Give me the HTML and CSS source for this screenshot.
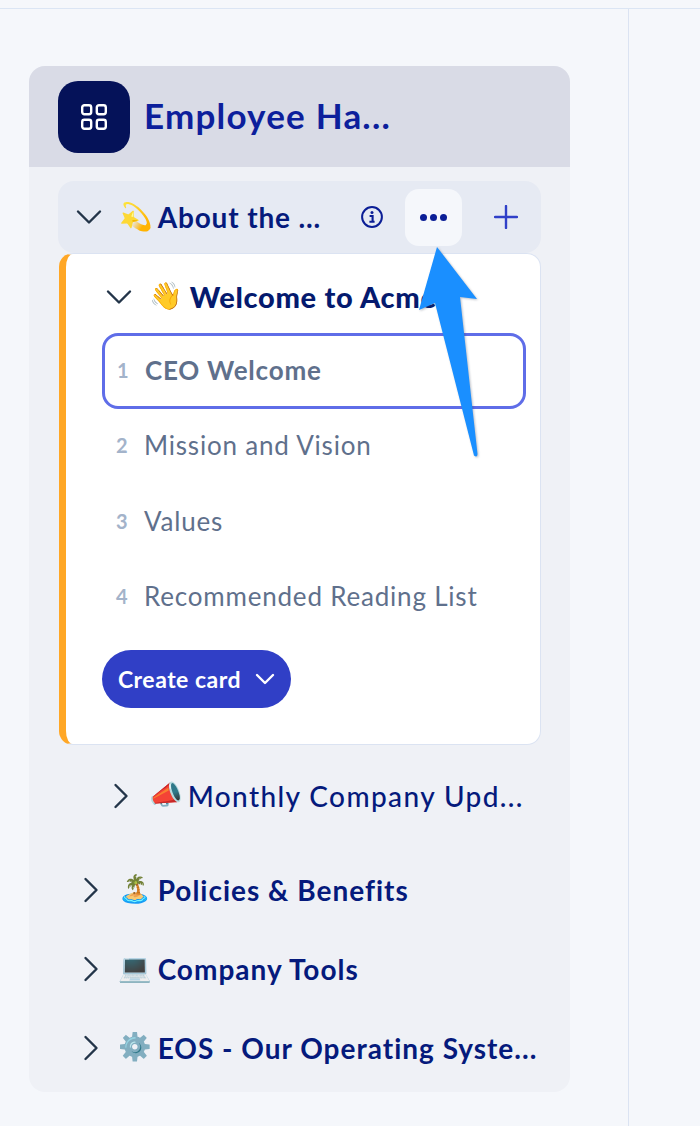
FILE: index.html
```html
<!DOCTYPE html>
<html lang="en">
<head>
<meta charset="utf-8">
<title>Employee Handbook</title>
<link rel="stylesheet" href="styles.css">
</head>
<body>
<div class="topbar"></div>
<div class="layout">
  <div class="left">
    <aside class="sidebar">
      <header class="head">
        <div class="logo">
          <svg width="26" height="26" viewBox="0 0 26 26" fill="none" stroke="#fff" stroke-width="2.4"><rect x="1.2" y="1.2" width="9" height="9" rx="2.2"/><rect x="15.800" y="1.2" width="9" height="9" rx="2.2"/><rect x="1.2" y="15.800" width="9" height="9" rx="2.2"/><rect x="15.800" y="15.800" width="9" height="9" rx="2.2"/></svg>
        </div>
        <h1 class="title">Employee Ha...</h1>
      </header>
      <div class="body">
        <div class="section-open">
          <svg class="chev" width="26" height="16" viewBox="0 0 26 16" fill="none" stroke="#233549" stroke-width="2.4" stroke-linecap="round" stroke-linejoin="round"><path d="M2 2.5 13 13.5 24 2.5"/></svg>
          <span class="emoji">💫</span>
          <span class="sec-name">About the ...</span>
          <svg class="info" width="24" height="24" viewBox="0 0 24 24" fill="none"><circle cx="12" cy="12" r="9.9" stroke="#0b1e96" stroke-width="2"/><circle cx="12" cy="7.6" r="1.5" fill="#0b1e96"/><path d="M9.6 11h3v5.6M9.4 16.8h5.2" stroke="#0b1e96" stroke-width="2.1"/></svg>
          <div class="more"><i></i><i></i><i></i></div>
          <svg class="plus" width="24" height="24" viewBox="0 0 24 24" fill="none" stroke="#3040c8" stroke-width="2.4" stroke-linecap="round"><path d="M12 1v22M1 12h22"/></svg>
        </div>
        <div class="card">
          <div class="chapter">
            <svg width="26" height="16" viewBox="0 0 26 16" fill="none" stroke="#233549" stroke-width="2.4" stroke-linecap="round" stroke-linejoin="round"><path d="M2 2.5 13 13.5 24 2.5"/></svg>
            <span class="emoji">👋</span>
            <span class="chapter-name">Welcome to Acme</span>
          </div>
          <div class="row active"><span class="num">1</span><span class="lbl">CEO Welcome</span></div>
          <div class="row"><span class="num">2</span><span class="lbl">Mission and Vision</span></div>
          <div class="row"><span class="num">3</span><span class="lbl">Values</span></div>
          <div class="row"><span class="num">4</span><span class="lbl">Recommended Reading List</span></div>
          <button class="create">Create card
            <svg width="20" height="12" viewBox="0 0 20 12" fill="none" stroke="#fff" stroke-width="2.4" stroke-linecap="round" stroke-linejoin="round"><path d="M2 2 10 10 18 2"/></svg>
          </button>
        </div>
        <div class="item sub">
          <svg width="16" height="26" viewBox="0 0 16 26" fill="none" stroke="#233549" stroke-width="2.4" stroke-linecap="round" stroke-linejoin="round"><path d="M2.5 2 13.5 13 2.5 24"/></svg>
          <span class="emoji">📣</span>
          <span class="item-name thin">Monthly Company Upd...</span>
        </div>
        <div class="item">
          <svg width="16" height="26" viewBox="0 0 16 26" fill="none" stroke="#233549" stroke-width="2.4" stroke-linecap="round" stroke-linejoin="round"><path d="M2.5 2 13.5 13 2.5 24"/></svg>
          <span class="emoji">🏝️</span>
          <span class="item-name">Policies &amp; Benefits</span>
        </div>
        <div class="item">
          <svg width="16" height="26" viewBox="0 0 16 26" fill="none" stroke="#233549" stroke-width="2.4" stroke-linecap="round" stroke-linejoin="round"><path d="M2.5 2 13.5 13 2.5 24"/></svg>
          <span class="emoji">💻</span>
          <span class="item-name">Company Tools</span>
        </div>
        <div class="item">
          <svg width="16" height="26" viewBox="0 0 16 26" fill="none" stroke="#233549" stroke-width="2.4" stroke-linecap="round" stroke-linejoin="round"><path d="M2.5 2 13.5 13 2.5 24"/></svg>
          <span class="emoji">⚙️</span>
          <span class="item-name">EOS - Our Operating Syste...</span>
        </div>
      </div>
    </aside>
  </div>
  <div class="right"></div>
</div>
<svg class="arrow" width="70" height="220" viewBox="0 0 70 220">
  <path d="M27 1 67 53 50 51 67.500 208Q67.500 212 64 209.500L25 57 9 64Z" fill="#1a8fff"/>
</svg>
</body>
</html>
```
FILE: styles.css
```css
* { box-sizing: border-box; }
html, body { margin: 0; padding: 0; }
body {
  position: relative;
  width: 700px;
  height: 1126px;
  overflow: hidden;
  background: #f5f7fb;
  font-family: "Lato", "Noto Sans", "Noto Color Emoji", sans-serif;
}
.topbar { height: 9px; border-bottom: 1px solid #dbe5f4; }
.layout { display: flex; height: 1117px; }
.left {
  width: 629px;
  border-right: 1px solid #dbe3f2;
  padding: 57px 0 0 29px;
}
.right { flex: 1; }
.sidebar {
  width: 541px;
  height: 1026px;
  background: #eff1f6;
  border-radius: 16px;
  overflow: hidden;
}
.head {
  height: 101px;
  background: #d9dbe6;
  display: flex;
  align-items: center;
  padding-left: 29px;
  gap: 14px;
}
.logo {
  width: 72px;
  height: 72px;
  border-radius: 20px;
  background: #051259;
  display: flex;
  align-items: center;
  justify-content: center;
}
.title {
  margin: 0;
  padding-bottom: 4px;
  font-size: 35px;
  font-weight: 700;
  color: #0d1f9c;
  letter-spacing: 1.2px;
}
.body { padding: 14px 29px 0; }
.section-open {
  height: 72px;
  width: 483px;
  background: #e6eaf3;
  border-radius: 16px;
  display: flex;
  align-items: center;
  padding-left: 18px;
}
.emoji { font-size: 27px; line-height: 1; font-family: "Noto Color Emoji", sans-serif; }
.section-open .emoji { margin-left: 17px; }
.sec-name {
  width: 199px;
  margin-left: 5px;
  font-size: 28px;
  font-weight: 700;
  color: #051a7c;
  letter-spacing: 0.85px;
}
.info { margin-left: 3px; }
.more {
  width: 57px;
  height: 57px;
  margin-left: 21px;
  border-radius: 14px;
  background: #f5f7fb;
  display: flex;
  align-items: center;
  justify-content: center;
  gap: 3px;
}
.more i { width: 7px; height: 7px; border-radius: 50%; background: #0b1e96; }
.plus { margin-left: 32px; }
.card {
  width: 482px;
  height: 492px;
  margin-left: 1px;
  background: #fff;
  border: 1px solid #dbe3f2;
  border-left: 7px solid #ffa726;
  border-radius: 14px;
  padding: 0 14px 0 36px;
}
.chapter { height: 79px; padding-top: 6px; display: flex; align-items: center; padding-left: 4px; }
.chapter .emoji { margin-left: 17px; }
.chapter-name {
  margin-left: 7px;
  font-size: 29px;
  font-weight: 900;
  color: #051a6e;
  letter-spacing: 0.7px;
  white-space: nowrap;
}
.row {
  height: 75.500px;
  display: flex;
  align-items: center;
  padding-left: 14px;
  padding-bottom: 3px;
  font-size: 26px;
  color: #5f708c;
  letter-spacing: 0.8px;
}
.row.active {
  height: 76px;
  border: 3px solid #5f6de8;
  border-radius: 16px;
  padding-left: 12px;
  font-weight: 700;
}
.num { width: 28px; font-size: 20px; font-weight: 700; color: #a3b3ca; letter-spacing: 0; }
.create {
  margin-top: 14px;
  height: 58px;
  width: 189px;
  border: 0;
  border-radius: 29px;
  background: #303fc6;
  color: #fff;
  font: 700 23px "Lato", sans-serif;
  letter-spacing: 0.5px;
  white-space: nowrap;
  padding: 0;
  display: flex;
  align-items: center;
  justify-content: center;
  gap: 14px;
}
.item { display: flex; align-items: center; height: 79px; padding-left: 25px; }
.item.sub { height: 101px; padding-left: 55px; margin-bottom: 4px; }
.item .emoji { margin-left: 19px; }
.item.sub .emoji { margin-left: 20px; }
.item-name {
  margin-left: 6px;
  font-size: 28px;
  font-weight: 700;
  color: #051a7c;
  letter-spacing: 1px;
  white-space: nowrap;
}
.item-name.thin { margin-left: 5px; font-weight: 500; letter-spacing: 1.4px; }
.arrow {
  position: absolute;
  left: 410px;
  top: 246px;
  filter: drop-shadow(1px 1px 1px rgba(60, 70, 90, 0.35));
}
```
